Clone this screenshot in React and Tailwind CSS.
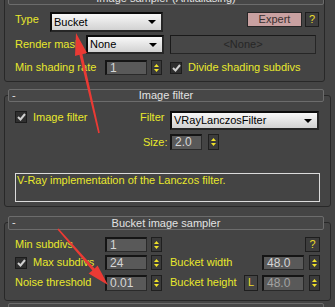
import React from 'react';

function Rollout({ title, className }) {
  return (
    <div
      className={`relative flex items-center justify-center border border-[#6c6c6c] rounded-[2px] bg-[#474747] text-[#e2e2e2] ${className}`}
    >
      <span className="absolute left-[3px] top-[-1px] text-[#e2e2e2]">-</span>
      <span>{title}</span>
    </div>
  );
}

function Label({ children, className = '' }) {
  return <span className={`shrink-0 whitespace-nowrap text-[#e8e82c] ${className}`}>{children}</span>;
}

function Dropdown({ value, className = '' }) {
  return (
    <div
      className={`shrink-0 flex items-center justify-between border-2 border-[#0c0c0c] border-b-[#262626] border-r-[#262626] bg-linear-to-b from-[#f8f8f8] to-[#d2d2d2] pl-[2px] pr-[5px] text-black ${className}`}
    >
      <span>{value}</span>
      <svg width="8" height="4" viewBox="0 0 8 4">
        <polygon points="0,0 8,0 4,4" fill="#000" />
      </svg>
    </div>
  );
}

function Field({ value, dim, className = '' }) {
  return (
    <div
      className={`shrink-0 flex items-center border border-[#2a2a2a] border-t-2 border-l-2 border-t-[#151515] border-l-[#151515] bg-[#595959] pl-[3px] ${
        dim ? 'text-[#a2a2a2]' : 'text-[#d6d6d6]'
      } text-[12px] ${className}`}
    >
      {value}
    </div>
  );
}

function Spin({ className = '' }) {
  return (
    <div
      className={`shrink-0 w-[11px] flex flex-col items-center justify-center gap-[2px] border border-[#1f1f1f] bg-[#3b3b3b] ${className}`}
    >
      <svg width="5" height="3" viewBox="0 0 5 3">
        <polygon points="0,3 5,3 2.5,0" fill="#f0e22a" />
      </svg>
      <svg width="5" height="3" viewBox="0 0 5 3">
        <polygon points="0,0 5,0 2.5,3" fill="#f0e22a" />
      </svg>
    </div>
  );
}

function Check({ className = '' }) {
  return (
    <div className={`shrink-0 w-[12px] h-[12px] flex items-center justify-center border border-[#1c1c1c] bg-[#2f2f2f] ${className}`}>
      <svg width="9" height="8" viewBox="0 0 9 8">
        <polyline points="1,4 3.5,6.5 8,1" fill="none" stroke="#d0d0d0" strokeWidth="2" />
      </svg>
    </div>
  );
}

function SmallBtn({ children, className = '' }) {
  return (
    <div
      className={`shrink-0 flex items-center justify-center border border-[#1e1e1e] bg-[#3d3d3d] text-[#ecdc2a] ${className}`}
    >
      {children}
    </div>
  );
}

export default function App() {
  return (
    <div className="relative w-[335px] h-[307px] overflow-hidden bg-[#444444] font-['Liberation_Sans',Arial,sans-serif] text-[11px] leading-[13px]">
      {/* Image sampler (Antialiasing) */}
      <div className="-mt-[3px] ml-[4px] w-[321px] border border-[#282828] rounded-[3px] pb-[6px]">
        <Rollout title="Image sampler (Antialiasing)" className="-mt-[7px] ml-[3px] w-[316px] h-[14px]" />

        <div className="flex items-start mt-[7px] h-[20px]">
          <Label className="ml-[10px] w-[35px] mt-[1px]">Type</Label>
          <Dropdown value="Bucket" className="w-[113px] h-[20px]" />
          <div className="ml-[84px] w-[55px] h-[15px] flex items-center justify-center border border-[#262626] bg-[#c9a1a1] text-[#3a3030]">
            Expert
          </div>
          <SmallBtn className="ml-[3px] w-[14px] h-[15px]">?</SmallBtn>
        </div>

        <div className="flex items-center mt-[3px] h-[19px]">
          <Label className="ml-[10px] w-[71px]">Render mask</Label>
          <Dropdown value="None" className="w-[78px] h-[19px]" />
          <div className="ml-[6px] w-[146px] h-[19px] flex items-center justify-center border border-[#262626] border-t-[#1a1a1a] border-l-[#1a1a1a] bg-[#474747] text-[#262626]">
            &lt;None&gt;
          </div>
        </div>

        <div className="flex items-center mt-[6px] h-[15px]">
          <Label className="ml-[10px] w-[90px]">Min shading rate</Label>
          <Field value="1" className="w-[42px] h-[15px]" />
          <Spin className="ml-[4px] h-[15px]" />
          <Check className="ml-[8px]" />
          <Label className="ml-[6px]">Divide shading subdivs</Label>
        </div>
      </div>

      {/* Image filter */}
      <div className="mt-[13px] ml-[4px] w-[327px] border border-[#282828] rounded-[3px] pb-[4px]">
        <Rollout title="Image filter" className="-mt-[7px] ml-[3px] w-[316px] h-[13px]" />

        <div className="flex items-start mt-[9px] h-[19px]">
          <Check className="ml-[10px]" />
          <Label className="ml-[6px] w-[107px]">Image filter</Label>
          <Label className="w-[30px]">Filter</Label>
          <Dropdown value="VRayLanczosFilter" className="w-[149px] h-[19px]" />
        </div>

        <div className="flex items-center mt-[4px] h-[16px]">
          <Label className="ml-[138px] w-[27px]">Size:</Label>
          <Field value="2.0" className="w-[32px] h-[16px]" />
          <Spin className="ml-[6px] h-[16px]" />
        </div>

        <div className="mt-[23px] ml-[10px] w-[305px] h-[29px] border border-[#dcdcdc] pl-[1px] text-[#e8e82c]">
          V-Ray implementation of the Lanczos filter.
        </div>
      </div>

      {/* Bucket image sampler */}
      <div className="mt-[15px] ml-[4px] w-[327px] border border-[#282828] rounded-[3px] pb-[9px]">
        <Rollout title="Bucket image sampler" className="-mt-[7px] ml-[3px] w-[316px] h-[14px]" />

        <div className="flex items-center mt-[7px] h-[15px]">
          <Label className="ml-[10px] w-[90px]">Min subdivs</Label>
          <Field value="1" className="w-[42px] h-[15px]" />
          <Spin className="ml-[4px] h-[15px]" />
          <SmallBtn className="ml-[143px] w-[15px] h-[15px]">?</SmallBtn>
        </div>

        <div className="flex items-center mt-[3px] h-[15px]">
          <Check className="ml-[10px]" />
          <Label className="ml-[6px] w-[72px]">Max subdivs</Label>
          <Field value="24" className="w-[42px] h-[15px]" />
          <Spin className="ml-[4px] h-[15px]" />
          <Label className="ml-[8px] w-[92px]">Bucket width</Label>
          <Field value="48.0" className="w-[42px] h-[15px]" />
          <Spin className="ml-[5px] h-[15px]" />
        </div>

        <div className="flex items-center mt-[4px] h-[17px]">
          <Label className="ml-[10px] w-[90px]">Noise threshold</Label>
          <Field value="0.01" className="w-[42px] h-[16px]" />
          <Spin className="ml-[4px] h-[16px]" />
          <Label className="ml-[8px] w-[74px]">Bucket height</Label>
          <SmallBtn className="w-[14px] h-[16px] bg-[#444444]">L</SmallBtn>
          <Field value="48.0" dim className="ml-[4px] w-[42px] h-[16px]" />
          <Spin className="ml-[5px] h-[16px]" />
        </div>
      </div>

      {/* next rollout, cut off */}
      <div className="mt-[2px] ml-[8px] w-[316px] h-[14px] border border-[#6c6c6c] rounded-[2px] bg-[#474747]" />

      {/* red annotation arrows */}
      <svg className="absolute inset-0 pointer-events-none" width="335" height="307" viewBox="0 0 335 307">
        <polygon
          points="76,33 75,56 79.4,54.8 98.2,133.2 99.8,132.8 82.4,54.2 87,53"
          fill="#ea3a34"
        />
        <polygon
          points="108,285 97.6,265.5 94.6,268.5 58.6,228.5 57.4,229.5 92.4,270.5 88.6,273.5"
          fill="#ea3a34"
        />
      </svg>
    </div>
  );
}
